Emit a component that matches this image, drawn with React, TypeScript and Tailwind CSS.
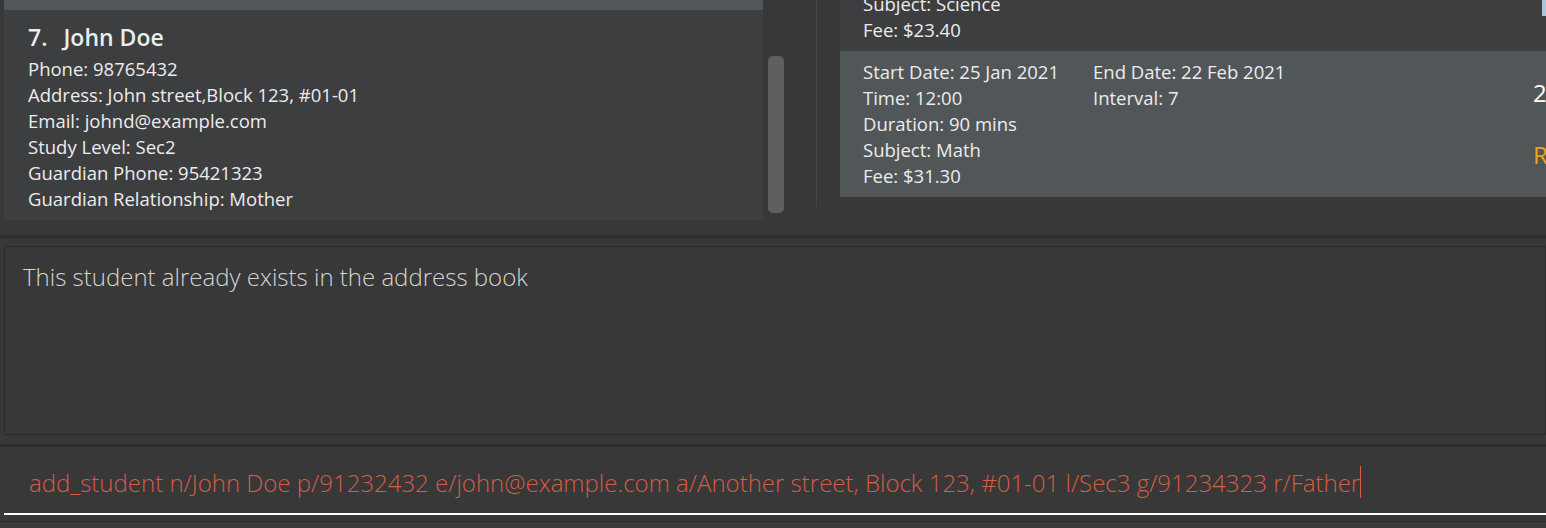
import React from "react";

const font = { fontFamily: '"Open Sans", "Noto Sans", sans-serif' };

function Line({ children }: { children: React.ReactNode }) {
  return <div className="h-[26px] leading-[26px] whitespace-nowrap">{children}</div>;
}

export default function App() {
  return (
    <div
      className="w-[1546px] h-[528px] bg-[#383838] overflow-hidden flex flex-col text-[#ececec] text-[18.5px]"
      style={font}
    >
      {/* top: student list + lesson list */}
      <div className="h-[235px] flex shrink-0">
        {/* student list */}
        <div className="w-[763px] pl-[4px] flex flex-col shrink-0">
          <div className="h-[10px] bg-[#515658]" />
          <div className="h-[210px] bg-[#3d3e40] pl-[24px] pt-[13px]">
            <div className="h-[30px] leading-[30px] text-[23px] font-semibold mb-[4px] -mt-px flex">
              <span>7.</span>
              <span className="ml-[16px]">John Doe</span>
            </div>
            <Line>Phone: 98765432</Line>
            <Line>Address: John street,Block 123, #01-01</Line>
            <Line>Email: johnd@example.com</Line>
            <Line>Study Level: Sec2</Line>
            <Line>Guardian Phone: 95421323</Line>
            <Line>Guardian Relationship: Mother</Line>
          </div>
        </div>
        {/* scrollbar */}
        <div className="w-[53px] shrink-0 pl-[5px] pt-[56px]">
          <div className="w-[16px] h-[157px] rounded-[5px] bg-[#5f5f5f]" />
        </div>
        {/* divider */}
        <div className="w-px h-[207px] bg-[#454545] shrink-0" />
        {/* lesson list */}
        <div className="flex-1 pl-[23px] flex flex-col">
          <div className="h-[51px] bg-[#3d3e40] pl-[23px] relative overflow-hidden">
            <div className="-mt-[9px]">
              <Line>Subject: Science</Line>
              <Line>Fee: $23.40</Line>
            </div>
            <div className="absolute right-0 top-0 w-[4px] h-[16px] bg-[#a9c6da]" />
          </div>
          <div className="h-[146px] bg-[#515658] pl-[23px] pt-[8px] flex relative">
            <div className="w-[230px]">
              <Line>Start Date: 25 Jan 2021</Line>
              <Line>Time: 12:00</Line>
              <Line>Duration: 90 mins</Line>
              <Line>Subject: Math</Line>
              <Line>Fee: $31.30</Line>
            </div>
            <div>
              <Line>End Date: 22 Feb 2021</Line>
              <Line>Interval: 7</Line>
            </div>
            <div className="absolute left-[693px] top-[26px] text-[24px] leading-[32px] text-white">2</div>
            <div className="absolute left-[693px] top-[88px] text-[24px] leading-[32px] text-[#f0a11c]">R</div>
          </div>
        </div>
      </div>

      {/* separator */}
      <div className="h-[3px] bg-[#2c2c2c] shrink-0" />

      {/* result display */}
      <div className="h-[206px] shrink-0 pl-[4px] pt-[8px] flex flex-col">
        <div className="h-[189px] border border-[#2b2b2b] bg-[#383838] pl-[18px] pt-[13px] text-[#d4d4d4] text-[24px] font-light leading-[34px]">
          This student already exists in the address book
        </div>
      </div>

      {/* command box */}
      <div className="h-[3px] bg-[#2c2c2c] shrink-0" />
      <div className="h-[68px] shrink-0 pl-[4px] flex flex-col">
        <div className="flex-1 pl-[25px] pt-[19px] text-[#d65c44] text-[24px] font-light leading-[34px] border-b-2 border-white whitespace-nowrap">
          add_student n/John Doe p/91232432 e/john@example.com a/Another street, Block 123, #01-01 l/Sec3 g/91234323 r/Father
          <span className="inline-block w-px h-[32px] bg-[#d65c44] align-top" />
        </div>
      </div>
      <div className="h-[6px] shrink-0" />
      <div className="h-px bg-[#2c2c2c] shrink-0" />
      <div className="flex-1 bg-[#3a3a3a]" />
    </div>
  );
}
